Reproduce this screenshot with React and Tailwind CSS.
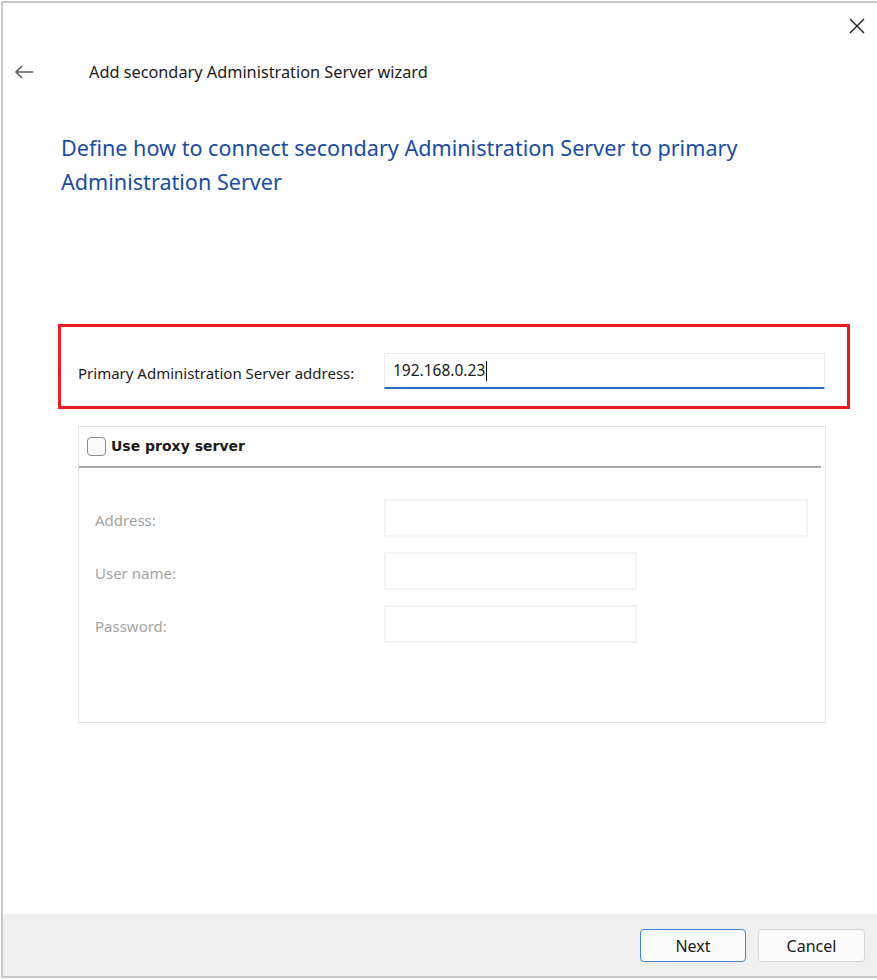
export default function App() {
  const ui = { fontFamily: '"Noto Sans", "Open Sans", sans-serif' };
  const tah = { fontFamily: '"DejaVu Sans", Verdana, sans-serif' };
  return (
    <div className="w-[877px] h-[980px] bg-white relative overflow-hidden">
      <div className="absolute left-[1px] top-[1px] w-[877px] h-[977px] border-l-2 border-t-2 border-b-2 border-[#c8c8cc] flex flex-col bg-white">
        <div className="flex justify-end pr-[13px] pt-[14px] h-[40px]">
          <svg width="16" height="16" viewBox="0 0 16 16" className="mt-[1px]">
            <path d="M1 1 L15 15 M15 1 L1 15" stroke="#1a1a1a" strokeWidth="1.4" />
          </svg>
        </div>
        <div className="flex items-center h-[40px] mt-[9px]" style={ui}>
          <svg width="20" height="16" viewBox="0 0 20 16" className="ml-[11px]">
            <path d="M19 8 H2 M8 2 L2 8 L8 14" stroke="#5f5f5f" strokeWidth="1.6" fill="none" />
          </svg>
          <span className="ml-[55px] text-[16.3px] text-[#1a1a1a]">Add secondary Administration Server wizard</span>
        </div>
        <div className="pl-[58px] pt-[39px] text-[21.6px] leading-[34px] text-[#1a4ca3]" style={ui}>
          Define how to connect secondary Administration Server to primary
          <br />
          Administration Server
        </div>
        <div className="ml-[55px] mt-[125px] w-[792px] h-[85px] border-[3px] border-[#ed1c24] flex items-end pb-[17px]">
          <span className="ml-[17px] mb-[5px] text-[15px] text-[#1a1a1a] w-[306px]" style={ui}>Primary Administration Server address:</span>
          <div className="w-[441px] h-[36px] border border-[#ececec] border-b-2 border-b-[#2b6cc4] flex items-center pl-[8px] text-[15.5px] text-[#1a1a1a]" style={ui}>
            192.168.0.23<span className="inline-block w-[1px] h-[20px] bg-black ml-[1px]" />
          </div>
        </div>
        <div className="ml-[75px] mt-[17px] w-[748px] h-[297px] border border-[#e2e2e2]">
          <div className="flex items-center h-[41px] mr-[4px] border-b-2 border-[#a8a8a8]">
            <div className="ml-[8px] w-[19px] h-[19px] rounded-[4px] border border-[#8a8a8a] bg-[#fafafa]" />
            <span className="ml-[5px] text-[14px] font-bold text-[#1a1a1a]" style={tah}>Use proxy server</span>
          </div>
          <div className="flex flex-col gap-[15px] mt-[31px]">
            {[
              ['Address:', 'w-[424px]'],
              ['User name:', 'w-[253px]'],
              ['Password:', 'w-[253px]'],
            ].map(([l, w]) => (
              <div key={l} className="flex items-center h-[38px]">
                <span className="ml-[16px] mt-[4px] w-[289px] text-[15px] text-[#a3a3a3]" style={ui}>{l}</span>
                <div className={`${w} h-[38px] border-2 border-[#f3f3f3]`} />
              </div>
            ))}
          </div>
        </div>
        <div className="flex-1" />
        <div className="h-[62px] bg-[#efefef] flex items-start justify-end pt-[15px] pr-[13px] gap-[12px]" style={ui}>
          <button className="w-[106px] h-[33px] rounded-[4px] bg-[#fbfbfb] border border-[#3f86d8] text-[16px] text-[#1a1a1a]">Next</button>
          <button className="w-[107px] h-[33px] rounded-[4px] bg-[#fbfbfb] border border-[#d6d6d6] text-[16px] text-[#1a1a1a]">Cancel</button>
        </div>
      </div>
    </div>
  );
}
